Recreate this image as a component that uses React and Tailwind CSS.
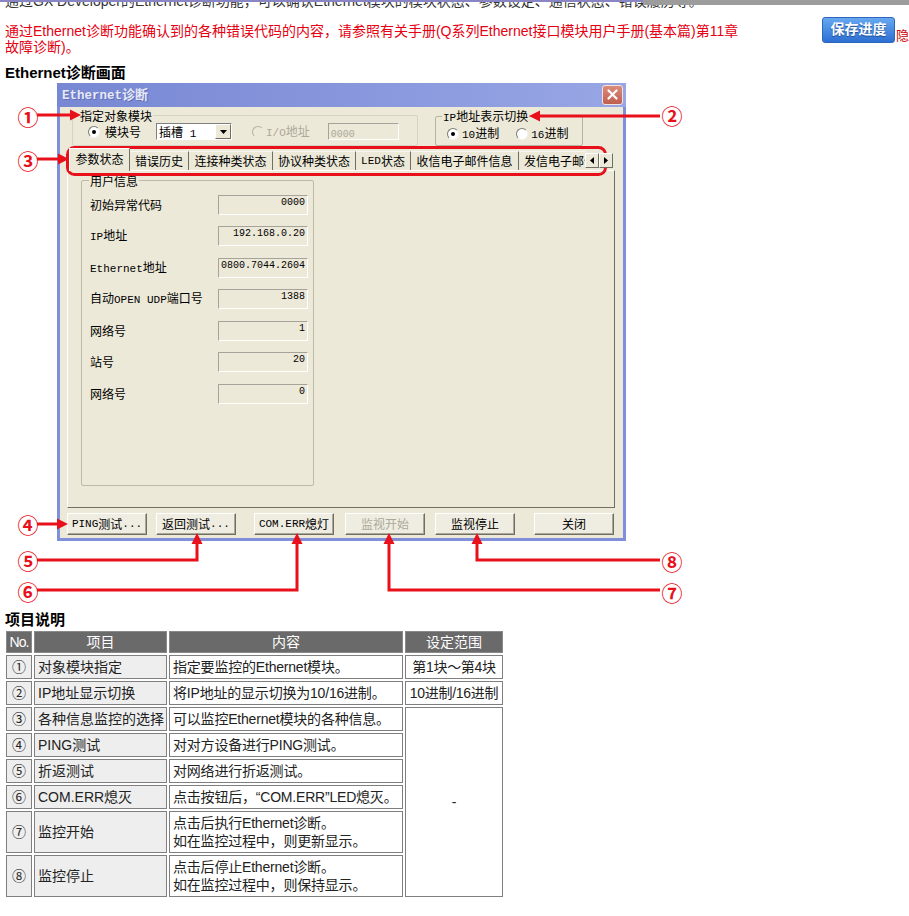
import React from "react";

const M = ({ children }) => (
  <span className="font-['Liberation_Mono',monospace] text-[11px]">{children}</span>
);

function Radio({ checked, disabled, className = "" }) {
  const base = disabled
    ? "w-[12px] h-[12px] rounded-full border border-t-[#b3b1a3] border-l-[#b3b1a3] border-r-[#ece9d8] border-b-[#ece9d8] bg-[#ece9d8] shrink-0 flex items-center justify-center"
    : "w-[12px] h-[12px] rounded-full border border-t-[#7d7b72] border-l-[#7d7b72] border-r-[#f4f3ee] border-b-[#f4f3ee] bg-white shrink-0 flex items-center justify-center";
  return (
    <span className={base + " " + className}>
      {checked && <span className="w-[4px] h-[4px] rounded-full bg-black" />}
    </span>
  );
}

function Btn({ children, disabled, className = "" }) {
  return (
    <div
      className={
        "w-[80px] h-[22px] flex items-center justify-center bg-[#efede2] border border-t-white border-l-white border-r-[#716f64] border-b-[#716f64] shadow-[inset_-1px_-1px_0_#aca899] " +
        (disabled ? "text-[#aca899] " : "text-black ") +
        className
      }
    >
      {children}
    </div>
  );
}

const fields = [
  ["初始异常代码", "0000"],
  [<><M>IP</M>地址</>, "192.168.0.20"],
  [<><M>Ethernet</M>地址</>, "0800.7044.2604"],
  [<>自动<M>OPEN UDP</M>端口号</>, "1388"],
  ["网络号", "1"],
  ["站号", "20"],
  ["网络号", "0"],
];

const tabs = [
  ["参数状态", "w-[61px]"],
  ["错误历史", "w-[59px]"],
  ["连接种类状态", "w-[84px]"],
  ["协议种类状态", "w-[83px]"],
  [<><M>LED</M>状态</>, "w-[55px]"],
  ["收信电子邮件信息", "w-[108px]"],
];

function Dialog() {
  return (
    <div className="ml-[57px] w-[569px] flex flex-col bg-[#7f8fd9] font-['Noto_Sans_CJK_SC',sans-serif] text-[12px] leading-[14px] text-black">
      {/* title bar */}
      <div className="h-[24px] flex items-center justify-between pl-[5px] pr-[3px] bg-linear-to-r from-[#7787d3] to-[#98a6e5]">
        <span className="font-bold text-[13px] text-[#e6e9f8] [text-shadow:1px_1px_0_#6270b8]">
          <span className="font-['Liberation_Mono',monospace] text-[12.5px]">Ethernet</span>诊断
        </span>
        <div className="w-[21px] h-[20px] rounded-[3px] border border-[#f3e3df] bg-linear-to-b from-[#dc8c7c] to-[#bf5f4f] flex items-center justify-center">
          <svg width="11" height="11" viewBox="0 0 11 11">
            <path d="M1.5 1.5L9.5 9.5M9.5 1.5L1.5 9.5" stroke="white" strokeWidth="2.2" strokeLinecap="round" />
          </svg>
        </div>
      </div>
      {/* body */}
      <div className="mx-[3px] mb-[3px] bg-[#ece9d8] pt-[3px] pl-[7px] pb-[3px] flex flex-col">
        {/* top groups */}
        <div className="flex h-[36px]">
          <fieldset className="ml-[5px] w-[346px] h-[36px] border border-[#d6d3c4] rounded-[2px]">
            <legend className="ml-[6px] px-[1px] leading-[12px]">指定对象模块</legend>
            <div className="flex items-center h-[18px] pl-[15px] mt-[1px]">
              <Radio checked />
              <span className="ml-[5px]">模块号</span>
              <div className="ml-[15px] w-[76px] h-[17px] flex bg-white border border-t-[#808080] border-l-[#808080] border-r-white border-b-white">
                <span className="flex-1 pl-[2px] leading-[15px]">
                  插槽<span className="font-['Liberation_Mono',monospace] text-[11px]"> 1</span>
                </span>
                <span className="w-[16px] h-[15px] bg-[#ece9d8] border border-t-white border-l-white border-r-[#716f64] border-b-[#716f64] flex items-center justify-center">
                  <svg width="7" height="4" viewBox="0 0 7 4"><path d="M0 0H7L3.5 4Z" fill="black" /></svg>
                </span>
              </div>
              <Radio disabled className="ml-[20px]" />
              <span className="ml-[2px] text-[#aca899]">
                <M>I/O</M>地址
              </span>
              <div className="ml-[18px] w-[71px] h-[17px] border border-t-[#a5a39a] border-l-[#a5a39a] border-r-white border-b-white pl-[2px] leading-[15px] text-[#aca899]">
                <span className="font-['Liberation_Mono',monospace] text-[10px]">0000</span>
              </div>
            </div>
          </fieldset>
          <fieldset className="ml-[17px] w-[148px] h-[36px] border border-[#b5b2a2] rounded-[2px]">
            <legend className="ml-[6px] px-[1px] leading-[12px]">
              <M>IP</M>地址表示切换
            </legend>
            <div className="flex items-center h-[18px] pl-[11px] mt-[1px]">
              <Radio checked />
              <span className="ml-[3px]">
                <M>10</M>进制
              </span>
              <Radio className="ml-[17px]" />
              <span className="ml-[3px]">
                <M>16</M>进制
              </span>
            </div>
          </fieldset>
        </div>
        {/* tab strip */}
        <div className="mt-[2px] h-[22px] w-[548px] flex items-end relative z-10">
          {tabs.map(([t, w], i) =>
            i === 0 ? (
              <div
                key={i}
                className={w + " ml-[2px] h-[23px] -mb-[1px] bg-[#ece9d8] border-t border-l border-r border-t-white border-l-white border-r-[#716f64] flex items-center justify-center pb-[1px]"}
              >
                {t}
              </div>
            ) : (
              <div
                key={i}
                className={w + " h-[19px] border-r border-r-[#716f64] border-t border-t-[#f7f6f0] flex items-center justify-center"}
              >
                {t}
              </div>
            )
          )}
          <div className="w-[66px] h-[19px] overflow-hidden whitespace-nowrap border-t border-t-[#f7f6f0] flex items-center pl-[5px]">
            发信电子邮件信息
          </div>
          <div className="h-[19px] flex items-start pt-[2px]">
            <div className="w-[14px] h-[15px] bg-[#ece9d8] border border-t-white border-l-white border-r-[#716f64] border-b-[#716f64] flex items-center justify-center">
              <svg width="4" height="7" viewBox="0 0 4 7"><path d="M4 0V7L0 3.5Z" fill="black" /></svg>
            </div>
            <div className="w-[14px] h-[15px] bg-[#ece9d8] border border-t-white border-l-white border-r-[#716f64] border-b-[#716f64] flex items-center justify-center">
              <svg width="4" height="7" viewBox="0 0 4 7"><path d="M0 0V7L4 3.5Z" fill="black" /></svg>
            </div>
          </div>
        </div>
        {/* tab panel */}
        <div className="w-[548px] h-[338px] border border-t-white border-l-white border-r-[#716f64] border-b-[#716f64] pt-[3px]">
          <fieldset className="ml-[13px] w-[233px] h-[312px] border border-[#bcb9a9] rounded-[2px]">
            <legend className="ml-[7px] px-[1px] leading-[13px]">用户信息</legend>
            <div className="flex flex-col gap-[11.5px] pt-[8px] pl-[8px] pr-[5px]">
              {fields.map(([l, v], i) => (
                <div key={i} className="h-[20px] flex items-center justify-between">
                  <span>{l}</span>
                  <div className="w-[90px] h-[20px] border border-t-[#a5a39a] border-l-[#a5a39a] border-r-white border-b-white text-right pr-[2px] leading-[14px] font-['Liberation_Mono',monospace] text-[10px]">
                    {v}
                  </div>
                </div>
              ))}
            </div>
          </fieldset>
        </div>
        {/* buttons */}
        <div className="mt-[5px] flex h-[22px]">
          <Btn>
            <M>PING</M>测试<M>...</M>
          </Btn>
          <Btn className="ml-[9px]">
            返回测试<M>...</M>
          </Btn>
          <Btn className="ml-[18px]">
            <M>COM.ERR</M>熄灯
          </Btn>
          <Btn disabled className="ml-[11px]">
            监视开始
          </Btn>
          <Btn className="ml-[10px]">监视停止</Btn>
          <Btn className="ml-[19px]">关闭</Btn>
        </div>
      </div>
    </div>
  );
}

const rows = [
  ["①", "对象模块指定", "指定要监控的Ethernet模块。", "第1块～第4块"],
  ["②", "IP地址显示切换", "将IP地址的显示切换为10/16进制。", "10进制/16进制"],
  ["③", "各种信息监控的选择", "可以监控Ethernet模块的各种信息。", "-"],
  ["④", "PING测试", "对对方设备进行PING测试。"],
  ["⑤", "折返测试", "对网络进行折返测试。"],
  ["⑥", "COM.ERR熄灭", "点击按钮后，“COM.ERR”LED熄灭。"],
  ["⑦", "监控开始", <>点击后执行Ethernet诊断。<br />如在监控过程中，则更新显示。</>],
  ["⑧", "监控停止", <>点击后停止Ethernet诊断。<br />如在监控过程中，则保持显示。</>],
];

function Annotations() {
  const R = "#e8101a";
  const right = (x, y) => `M${x} ${y}L${x - 11} ${y - 5.5}L${x - 11} ${y + 5.5}Z`;
  const left = (x, y) => `M${x} ${y}L${x + 11} ${y - 5.5}L${x + 11} ${y + 5.5}Z`;
  const up = (x, y) => `M${x} ${y}L${x - 5.5} ${y + 11}L${x + 5.5} ${y + 11}Z`;
  return (
    <svg className="absolute left-0 top-0 pointer-events-none" width="909" height="916">
      <g fill="none" stroke={R} strokeWidth="3">
        <rect x="67.5" y="147.5" width="538" height="27" rx="7" />
        <path d="M37 115H71" />
        <path d="M660 116H540" />
        <path d="M37 159H58" />
        <path d="M37 524H57" />
        <path d="M37 560H197V543" />
        <path d="M37 590H297V543" />
        <path d="M660 560H477V543" />
        <path d="M660 590H389V543" />
      </g>
      <g fill={R}>
        <path d={right(81, 115)} />
        <path d={left(529, 116)} />
        <path d={right(69, 159)} />
        <path d={right(68, 524)} />
        <path d={up(197, 533)} />
        <path d={up(297, 533)} />
        <path d={up(477, 533)} />
        <path d={up(389, 533)} />
      </g>
      <g
        fill={R}
        fontFamily="Noto Sans CJK SC, sans-serif"
        fontSize="21"
        fontWeight="700"
        textAnchor="middle"
        dominantBaseline="central"
      >
        <text x="28" y="116">①</text>
        <text x="672" y="115">②</text>
        <text x="28" y="160">③</text>
        <text x="28" y="524">④</text>
        <text x="28" y="560">⑤</text>
        <text x="28" y="591">⑥</text>
        <text x="672" y="592">⑦</text>
        <text x="672" y="561">⑧</text>
      </g>
    </svg>
  );
}

export default function App() {
  return (
    <div className="relative w-[909px] h-[916px] overflow-hidden bg-white font-['Liberation_Sans','Noto_Sans_CJK_SC',sans-serif] text-[14px]">
      <div className="absolute left-0 top-0 w-[645px] h-[2px] bg-[#8a86c6]" />
      <div className="absolute left-[643px] top-0 w-[266px] h-[5px] bg-[#9c9c9c]" />
      <div className="h-[10px] overflow-hidden pl-[5px]">
        <p className="-mt-[7px] leading-[16px] text-[#333] whitespace-nowrap">
          通过GX Developer的Ethernet诊断功能，可以确认Ethernet模块的模块状态、参数设定、通信状态、错误履历等。
        </p>
      </div>
      <div className="flex w-[909px]">
        <p className="w-[822px] shrink-0 pl-[5px] mt-[13px] leading-[16px] text-[#e60012] whitespace-nowrap">
          通过Ethernet诊断功能确认到的各种错误代码的内容，请参照有关手册(Q系列Ethernet接口模块用户手册(基本篇)第11章
          <br />
          故障诊断)。
        </p>
        <div className="flex items-end shrink-0 mt-[7px] h-[26px]">
          <div className="w-[73px] h-[26px] shrink-0 rounded-[3px] border border-[#2d67bb] bg-linear-to-b from-[#67a8f0] to-[#2c6fd2] flex items-center justify-center text-white font-bold text-[14px] pb-[2px] [text-shadow:0_1px_1px_#1b4a90]">
            保存进度
          </div>
          <span className="ml-[1px] shrink-0 text-[13px] leading-[15px] text-[#cc0000] whitespace-nowrap">隐藏</span>
        </div>
      </div>
      <h2 className="mt-[10px] pl-[5px] font-bold text-[15px] leading-[16px] text-black">Ethernet诊断画面</h2>
      <div className="mt-[1.5px]">
        <Dialog />
      </div>
      <h2 className="mt-[71px] pl-[5px] font-bold text-[15px] leading-[16px] text-black">项目说明</h2>
      <table className="table-fixed w-[501px] ml-[4px] mt-[1px] border-separate border-spacing-[2px] text-[14px] leading-[18px] text-[#222]">
        <colgroup>
          <col className="w-[26px]" />
          <col className="w-[133px]" />
          <col className="w-[234px]" />
          <col className="w-[98px]" />
        </colgroup>
        <thead>
          <tr>
            <th className="h-[22px] p-0 bg-[#6a6a6a] border border-[#8a8a8a] text-white font-normal tracking-[-1px]">No.</th>
            <th className="p-0 bg-[#6a6a6a] border border-[#8a8a8a] text-white font-normal">项目</th>
            <th className="p-0 bg-[#6a6a6a] border border-[#8a8a8a] text-white font-normal">内容</th>
            <th className="p-0 bg-[#6a6a6a] border border-[#8a8a8a] text-white font-normal">设定范围</th>
          </tr>
        </thead>
        <tbody>
          {rows.map(([n, a, b, c], i) => (
            <tr key={i}>
              <td className={(i >= 6 ? "h-[42px] " : "h-[24px] ") + "p-0 text-center bg-[#eeeeee] border border-[#7f7f7f]"}>{n}</td>
              <td className="px-[3px] py-0 bg-[#eeeeee] border border-[#7f7f7f] whitespace-nowrap">{a}</td>
              <td className="px-[3px] py-0 bg-white border border-[#7f7f7f] whitespace-nowrap tracking-[-0.2px]">{b}</td>
              {i < 2 && <td className="p-0 text-center bg-white border border-[#7f7f7f] whitespace-nowrap tracking-[-0.3px]">{c}</td>}
              {i === 2 && (
                <td rowSpan={6} className="p-0 text-center bg-white border border-[#7f7f7f]">
                  -
                </td>
              )}
            </tr>
          ))}
        </tbody>
      </table>
      <Annotations />
    </div>
  );
}
